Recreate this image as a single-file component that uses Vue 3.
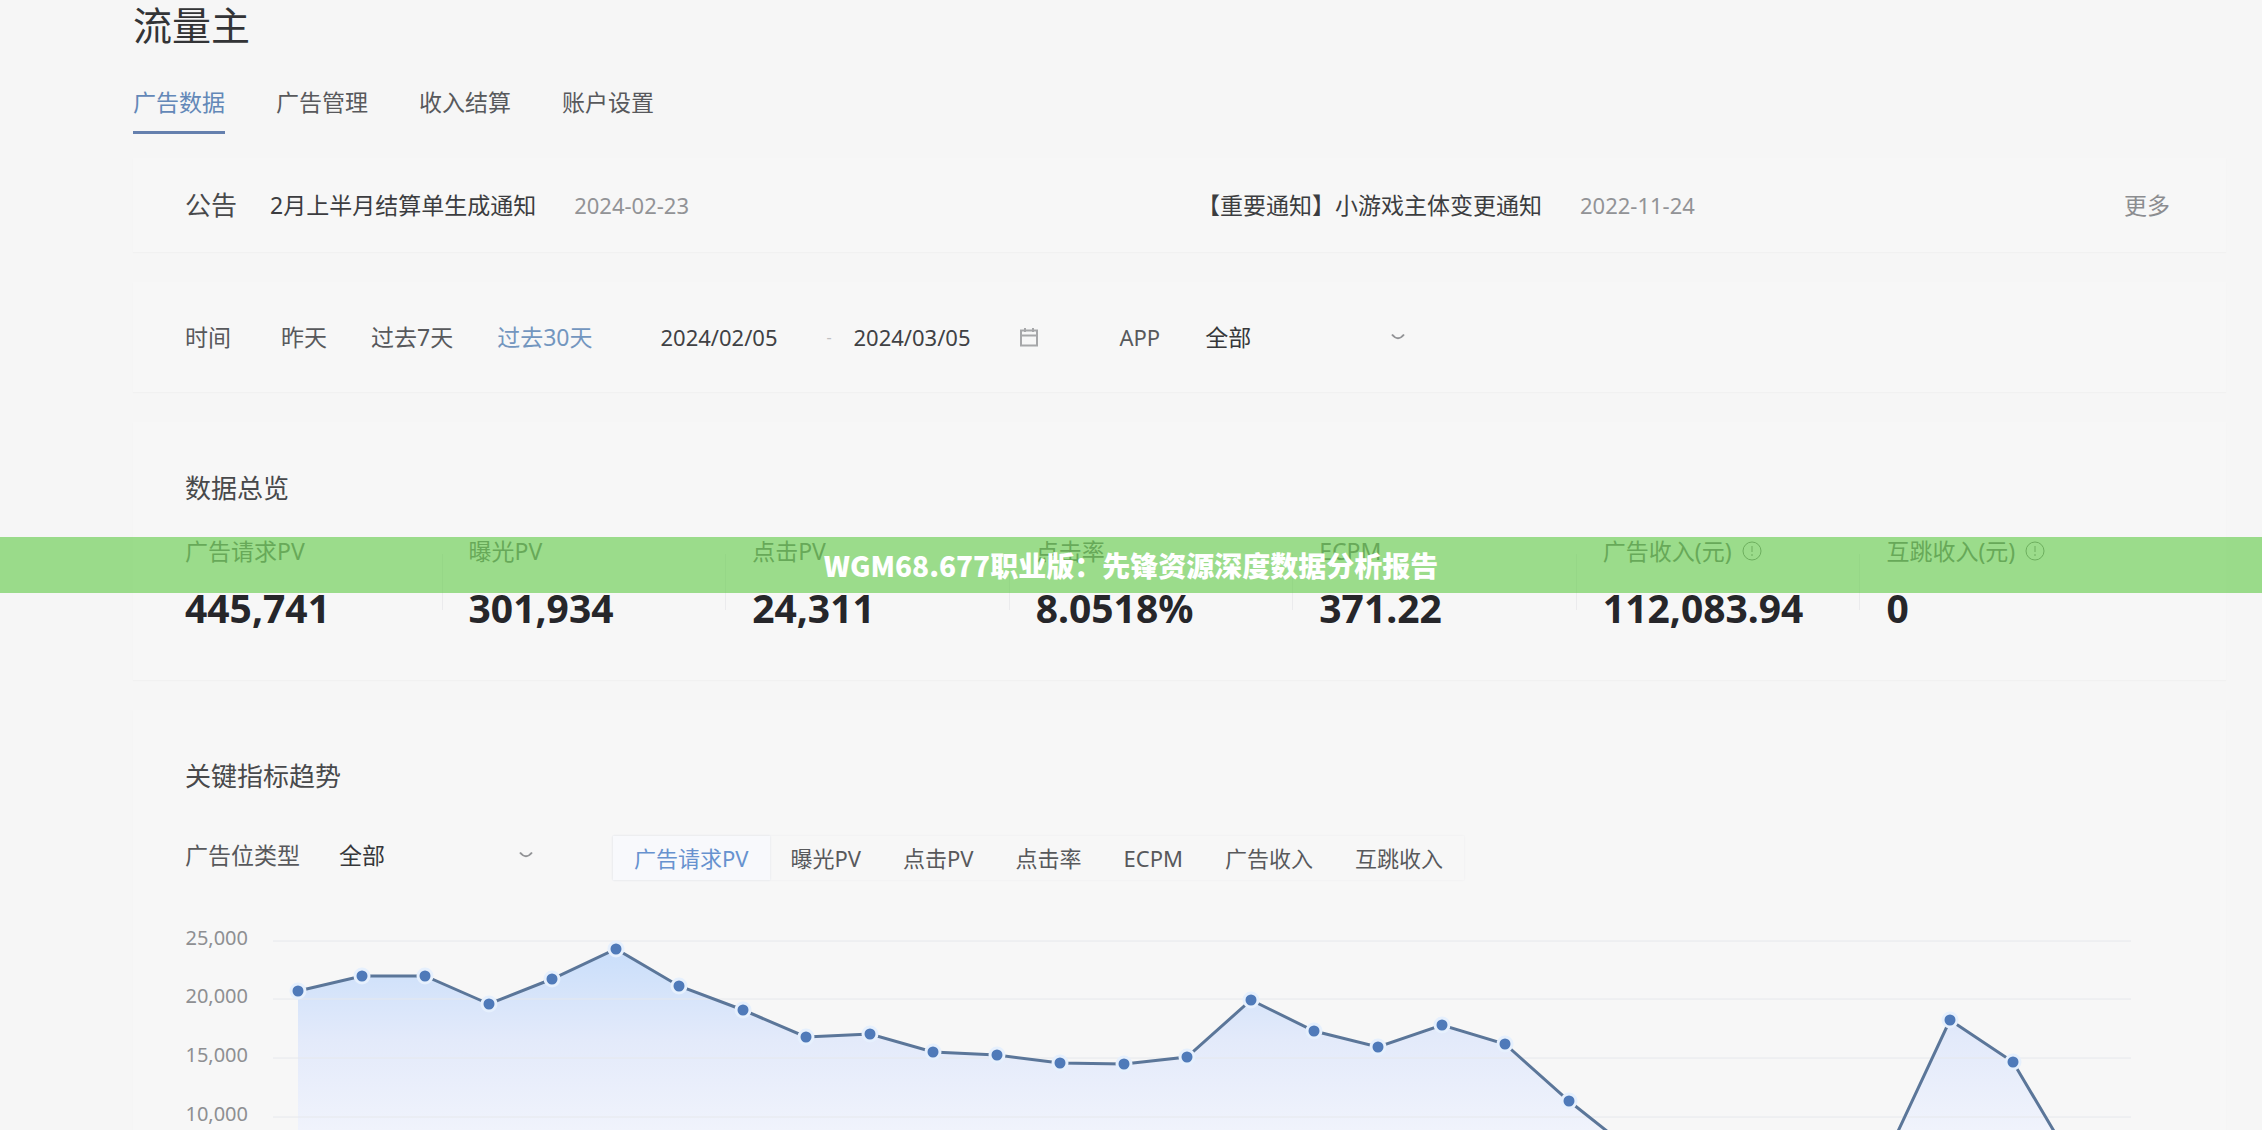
<script setup>
import { ref } from 'vue'

const tabs = ['广告数据', '广告管理', '收入结算', '账户设置']
const activeTab = ref(0)

const notices = [
  { title: '2月上半月结算单生成通知', date: '2024-02-23' },
  { title: '【重要通知】小游戏主体变更通知', date: '2022-11-24' },
]

const ranges = ['昨天', '过去7天', '过去30天']
const activeRange = ref(2)
const startDate = ref('2024/02/05')
const endDate = ref('2024/03/05')

const stats = [
  { label: '广告请求PV', value: '445,741' },
  { label: '曝光PV', value: '301,934' },
  { label: '点击PV', value: '24,311' },
  { label: '点击率', value: '8.0518%' },
  { label: 'ECPM', value: '371.22' },
  { label: '广告收入(元)', value: '112,083.94', tip: true },
  { label: '互跳收入(元)', value: '0', tip: true },
]

const metrics = ['广告请求PV', '曝光PV', '点击PV', '点击率', 'ECPM', '广告收入', '互跳收入']
const activeMetric = ref(0)

const ticks = [
  { label: '25,000', y: 61 },
  { label: '20,000', y: 119 },
  { label: '15,000', y: 178 },
  { label: '10,000', y: 237 },
]

const heights = [
  111, 96, 96, 124, 99, 69, 106, 130, 157, 154, 172, 175, 183, 184, 177, 120,
  151, 167, 145, 164, 221, 271, 330, 340, 335, 277, 140, 182, 290,
]
const points = heights.map((y, i) => ({ x: 113 + Math.round(i * 63.53), y }))
const line = points.map((p) => `${p.x},${p.y}`).join(' ')
const area = `${points[0].x},400 ${line} ${points[points.length - 1].x},400`
</script>

<template>
  <div class="page">
    <h1 class="title">流量主</h1>

    <nav class="tabs">
      <button
        v-for="(tab, i) in tabs"
        :key="tab"
        type="button"
        class="tab"
        :class="{ active: i === activeTab }"
        @click="activeTab = i"
      >{{ tab }}</button>
    </nav>

    <section class="card notice">
      <h2 class="notice-label">公告</h2>
      <ul class="notice-list">
        <li v-for="n in notices" :key="n.date">
          <a href="#">{{ n.title }}</a>
          <time>{{ n.date }}</time>
        </li>
      </ul>
      <a href="#" class="more">更多</a>
    </section>

    <section class="card filters">
      <span class="label">时间</span>
      <div class="ranges">
        <button
          v-for="(r, i) in ranges"
          :key="r"
          type="button"
          :class="{ active: i === activeRange }"
          @click="activeRange = i"
        >{{ r }}</button>
      </div>
      <div class="dates">
        <input v-model="startDate" type="text" aria-label="开始日期" />
        <span class="dash">-</span>
        <input v-model="endDate" type="text" aria-label="结束日期" />
        <svg class="calendar" viewBox="0 0 20 20" aria-hidden="true">
          <path d="M2 3.500h16v15h-16zM2 8.500h16M6 1v4M14 1v4" />
        </svg>
      </div>
      <label class="label app-label" for="app">APP</label>
      <div class="select app-select">
        <select id="app"><option>全部</option></select>
        <svg viewBox="0 0 14 8" aria-hidden="true"><path d="M1 1.500Q7 9 13 1.500" /></svg>
      </div>
    </section>

    <section class="card overview">
      <h2 class="heading">数据总览</h2>
      <dl class="stats">
        <div v-for="s in stats" :key="s.label" class="stat">
          <dt>
            {{ s.label }}
            <svg v-if="s.tip" viewBox="0 0 20 20" aria-hidden="true">
              <circle cx="10" cy="10" r="9" />
              <path d="M10 5v6M10 13v2" />
            </svg>
          </dt>
          <dd>{{ s.value }}</dd>
        </div>
      </dl>
    </section>

    <section class="card trend">
      <h2 class="heading">关键指标趋势</h2>
      <div class="trend-bar">
        <label class="label" for="slot">广告位类型</label>
        <div class="select slot-select">
          <select id="slot"><option>全部</option></select>
          <svg viewBox="0 0 14 8" aria-hidden="true"><path d="M1 1.500Q7 9 13 1.500" /></svg>
        </div>
        <div class="metrics">
          <button
            v-for="(m, i) in metrics"
            :key="m"
            type="button"
            :class="{ active: i === activeMetric }"
            @click="activeMetric = i"
          >{{ m }}</button>
        </div>
      </div>
      <svg class="chart" viewBox="0 0 1985 250" role="img" aria-label="广告请求PV趋势">
        <defs>
          <linearGradient id="fill" gradientUnits="userSpaceOnUse" x1="0" y1="69" x2="0" y2="250">
            <stop offset="0" stop-color="#c9defa" />
            <stop offset="0.500" stop-color="#e3eafa" />
            <stop offset="1" stop-color="#f0f3fc" />
          </linearGradient>
        </defs>
        <polygon :points="area" fill="url(#fill)" />
        <g v-for="t in ticks" :key="t.label">
          <line class="grid" x1="88" x2="1946" :y1="t.y" :y2="t.y" />
          <text class="tick" x="63" :y="t.y + 4">{{ t.label }}</text>
        </g>
        <polyline class="line" :points="line" />
        <circle v-for="p in points" :key="p.x" class="dot" :cx="p.x" :cy="p.y" r="7" />
      </svg>
    </section>

    <div class="banner">WGM68.677职业版：先锋资源深度数据分析报告</div>
  </div>
</template>

<style>
body {
  background: #f6f6f6;
}
</style>

<style scoped>
.page {
  position: relative;
  box-sizing: border-box;
  height: 100vh;
  overflow: hidden;
  padding: 0 36px 0 133px;
  background: #f6f6f6;
  color: #58595c;
  font-family: "Noto Sans", "Noto Sans CJK SC", sans-serif;
  font-size: 23px;
  line-height: 34px;
}

h1,
h2,
ul,
dl,
dd {
  margin: 0;
  padding: 0;
  font-weight: 400;
}

button,
input,
select {
  margin: 0;
  padding: 0;
  border: 0;
  background: none;
  color: inherit;
  font: inherit;
}

button {
  white-space: nowrap;
  cursor: pointer;
}

a {
  color: inherit;
  text-decoration: none;
}

.title {
  color: #333436;
  font-size: 39px;
  line-height: 50px;
}

.tabs {
  display: flex;
  gap: 51px;
  margin-top: 35px;
}

.tab {
  padding-bottom: 12px;
  border-bottom: 3px solid transparent;
}

.tab.active {
  border-color: #6580ae;
  color: #6388b8;
}

.card {
  box-sizing: border-box;
  margin-top: 30px;
  padding: 0 56px 0 52px;
  background: #f7f7f7;
  box-shadow: 0 1px 1px #f1f1f1;
}

.notice {
  display: flex;
  align-items: center;
  height: 94px;
  margin-top: 24px;
}

.notice-label {
  margin-right: 33px;
  color: #48494b;
  font-size: 26px;
}

.notice-list {
  display: grid;
  flex: 1;
  grid-template-columns: 1fr 1fr;
  list-style: none;
}

.notice-list li {
  display: flex;
  align-items: center;
  gap: 38px;
  color: #3c3d40;
}

.notice-list time {
  color: #929396;
  font-size: 22px;
}

.more {
  color: #8c8d90;
}

.filters {
  display: flex;
  align-items: center;
  height: 110px;
}

.ranges,
.metrics {
  display: flex;
}

.ranges {
  margin-left: 28px;
}

.ranges button {
  height: 46px;
  padding: 0 22px;
}

.ranges .active {
  color: #7396bf;
}

.dates {
  display: flex;
  align-items: center;
  gap: 16px;
  margin-left: 25px;
  padding: 0 21px;
  color: #404144;
  font-size: 22px;
}

.dates input {
  width: 150px;
}

.dash {
  width: 11px;
  color: #c0c0c2;
  font-size: 16px;
}

.calendar {
  width: 20px;
  height: 20px;
  fill: none;
  stroke: #a6a7a9;
  stroke-width: 2;
}

.app-label {
  margin-left: 59px;
  font-size: 22px;
}

.select {
  position: relative;
  color: #36373a;
}

.select select {
  width: 100%;
  height: 38px;
  appearance: none;
}

.select svg {
  position: absolute;
  top: 15px;
  right: 0;
  width: 14px;
  height: 8px;
  fill: none;
  stroke: #929396;
  stroke-width: 2;
  pointer-events: none;
}

.app-select {
  width: 200px;
  margin-left: 45px;
}

.slot-select {
  width: 194px;
  margin-left: 39px;
}

.heading {
  color: #48494b;
  font-size: 26px;
  line-height: 36px;
}

.overview {
  padding-top: 48px;
  padding-bottom: 50px;
}

.stats {
  display: grid;
  grid-template-columns: repeat(7, 1fr);
  margin-top: 28px;
}

.stat {
  position: relative;
}

.stat + .stat::before {
  content: "";
  position: absolute;
  top: 20px;
  bottom: 20px;
  left: -27px;
  width: 1px;
  background: #ebebed;
}

.stat dt {
  display: flex;
  align-items: center;
  gap: 10px;
  color: #77787a;
}

.stat dt svg {
  width: 20px;
  height: 20px;
  fill: none;
  stroke: #858688;
  stroke-width: 1;
}

.stat dd {
  margin-top: 18px;
  color: #26262a;
  font-size: 39px;
  font-weight: 700;
  line-height: 44px;
}

.trend {
  padding-top: 48px;
}

.trend-bar {
  display: flex;
  align-items: flex-start;
  margin-top: 42px;
}

.trend-bar .label {
  line-height: 38px;
}

.metrics {
  margin-left: 80px;
  box-shadow: 0 0 2px #ededef;
  font-size: 22px;
}

.metrics button {
  height: 44px;
  padding: 0 21px;
}

.metrics .active {
  background: #f8f9fc;
  box-shadow: 0 0 2px #dfe3ea;
  color: #6792cf;
}

.chart {
  display: block;
  width: 100%;
  height: auto;
}

.grid {
  stroke: #e6e8ec;
}

.tick {
  fill: #8e8f92;
  font-size: 20px;
  text-anchor: end;
}

.line {
  fill: none;
  stroke: #5b7699;
  stroke-width: 3;
}

.dot {
  fill: #4f7ab9;
  stroke: #e6f0fd;
  stroke-width: 3;
}

.banner {
  position: absolute;
  top: 537px;
  left: 0;
  right: 0;
  background: rgba(94, 202, 67, 0.6);
  color: #fff;
  font-family: "Noto Sans CJK SC", sans-serif;
  font-size: 28px;
  font-weight: 900;
  line-height: 56px;
  text-align: center;
}
</style>
